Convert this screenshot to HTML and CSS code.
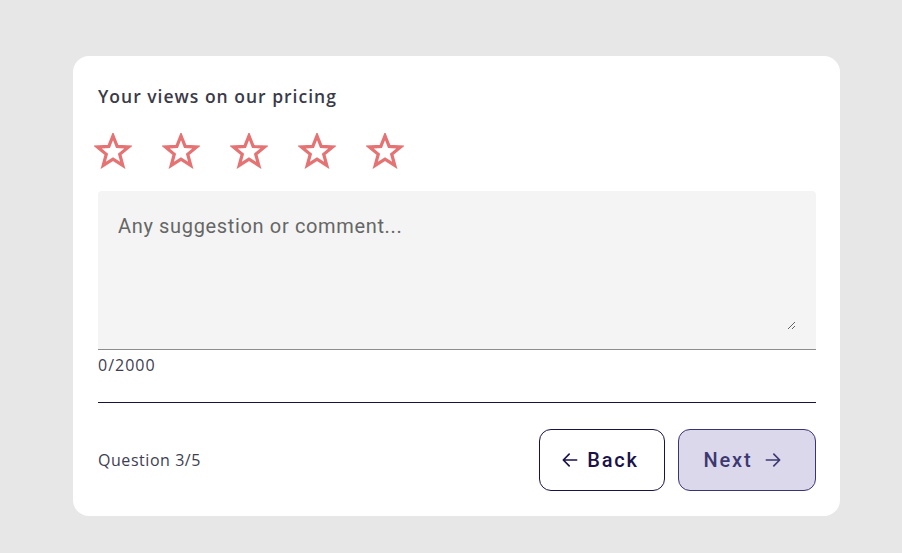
FILE: index.html
```html
<!DOCTYPE html>
<html lang="en">
<head>
<meta charset="utf-8">
<title>Feedback</title>
<link rel="stylesheet" href="styles.css">
</head>
<body>
<main class="card">
  <h2 class="title">Your views on our pricing</h2>
  <div class="stars">
    <svg class="star" viewBox="0 0 40 38"><polygon points="20,3 24.4,14.2 36.5,14.8 27.1,22.4 30.3,34.2 20,27.5 9.7,34.2 12.9,22.4 3.5,14.8 15.6,14.2"/></svg>
    <svg class="star" viewBox="0 0 40 38"><polygon points="20,3 24.4,14.2 36.5,14.8 27.1,22.4 30.3,34.2 20,27.5 9.7,34.2 12.9,22.4 3.5,14.8 15.6,14.2"/></svg>
    <svg class="star" viewBox="0 0 40 38"><polygon points="20,3 24.4,14.2 36.5,14.8 27.1,22.4 30.3,34.2 20,27.5 9.7,34.2 12.9,22.4 3.5,14.8 15.6,14.2"/></svg>
    <svg class="star" viewBox="0 0 40 38"><polygon points="20,3 24.4,14.2 36.5,14.8 27.1,22.4 30.3,34.2 20,27.5 9.7,34.2 12.9,22.4 3.5,14.8 15.6,14.2"/></svg>
    <svg class="star" viewBox="0 0 40 38"><polygon points="20,3 24.4,14.2 36.5,14.8 27.1,22.4 30.3,34.2 20,27.5 9.7,34.2 12.9,22.4 3.5,14.8 15.6,14.2"/></svg>
  </div>
  <div class="field">
    <textarea class="input" placeholder="Any suggestion or comment..."></textarea>
  </div>
  <div class="counter">0/2000</div>
  <hr class="divider">
  <div class="footer">
    <span class="progress">Question 3/5</span>
    <div class="actions">
      <button class="btn btn-back">
        <svg class="arrow" viewBox="0 0 24 24"><path d="M20 12H5M11 5l-7 7 7 7"/></svg>
        <span>Back</span>
      </button>
      <button class="btn btn-next">
        <span>Next</span>
        <svg class="arrow" viewBox="0 0 24 24"><path d="M4 12h15M13 5l7 7-7 7"/></svg>
      </button>
    </div>
  </div>
</main>
</body>
</html>
```
FILE: styles.css
```css
html, body {
  margin: 0;
  padding: 0;
  background: #e7e7e7;
}
body {
  padding: 56px 0 0 73px;
  font-family: "Open Sans", "Noto Sans", sans-serif;
}
.card {
  box-sizing: border-box;
  width: 767px;
  height: 460px;
  background: #fff;
  border-radius: 16px;
  padding: 24px 24px 25px 25px;
  display: flex;
  flex-direction: column;
}
.title {
  margin: 0;
  font-size: 17.5px;
  line-height: 32px;
  font-weight: 600;
  letter-spacing: 1px;
  color: #3a3a48;
}
.stars {
  display: flex;
  gap: 30px;
  margin-top: 21px;
  height: 36px;
  margin-left: -4px;
}
.star {
  width: 38px;
  height: 36px;
}
.star polygon {
  fill: none;
  stroke: #e57373;
  stroke-width: 3.4;
  stroke-linejoin: miter;
}
.field {
  margin-top: 22px;
  box-sizing: border-box;
  height: 159px;
  background: #f4f4f4;
  border-radius: 4px 4px 0 0;
  border-bottom: 1px solid #8d8d8d;
  padding: 23px 20px 19px 20px;
  display: flex;
}
.input {
  flex: 1;
  border: 0;
  outline: 0;
  background: transparent;
  padding: 0;
  margin: 0;
  resize: vertical;
  font-family: Roboto, sans-serif;
  font-size: 20px;
  line-height: 24px;
  letter-spacing: 0.65px;
  color: #333;
}
.input::placeholder {
  color: #666;
}
.counter {
  margin-top: 6px;
  font-size: 16px;
  line-height: 18px;
  letter-spacing: 1px;
  color: #3e3e52;
}
.divider {
  margin: 28px 0 0;
  border: 0;
  height: 1px;
  background: #1b1240;
}
.footer {
  margin-top: 26px;
  display: flex;
  align-items: center;
  justify-content: space-between;
}
.progress {
  font-size: 16px;
  letter-spacing: 0.55px;
  color: #3e3e52;
}
.actions {
  display: flex;
  gap: 13px;
}
.btn {
  height: 62px;
  box-sizing: border-box;
  border-radius: 12px;
  display: flex;
  align-items: center;
  justify-content: center;
  font-family: Roboto, sans-serif;
  font-weight: 500;
  font-size: 20px;
  letter-spacing: 1.8px;
  cursor: pointer;
}
.btn-back {
  width: 126px;
  background: #fff;
  border: 1px solid #1a1248;
  color: #1a1248;
  gap: 7px;
  padding: 0 5px 0 0;
}
.btn-next {
  width: 138px;
  background: #dcd8ec;
  border: 1px solid #3b3473;
  color: #3d3870;
  gap: 11px;
  padding: 0 7px 0 0;
}
.arrow {
  width: 20px;
  height: 20px;
}
.arrow path {
  fill: none;
  stroke: currentColor;
  stroke-width: 2;
  stroke-linecap: round;
  stroke-linejoin: round;
}
```
